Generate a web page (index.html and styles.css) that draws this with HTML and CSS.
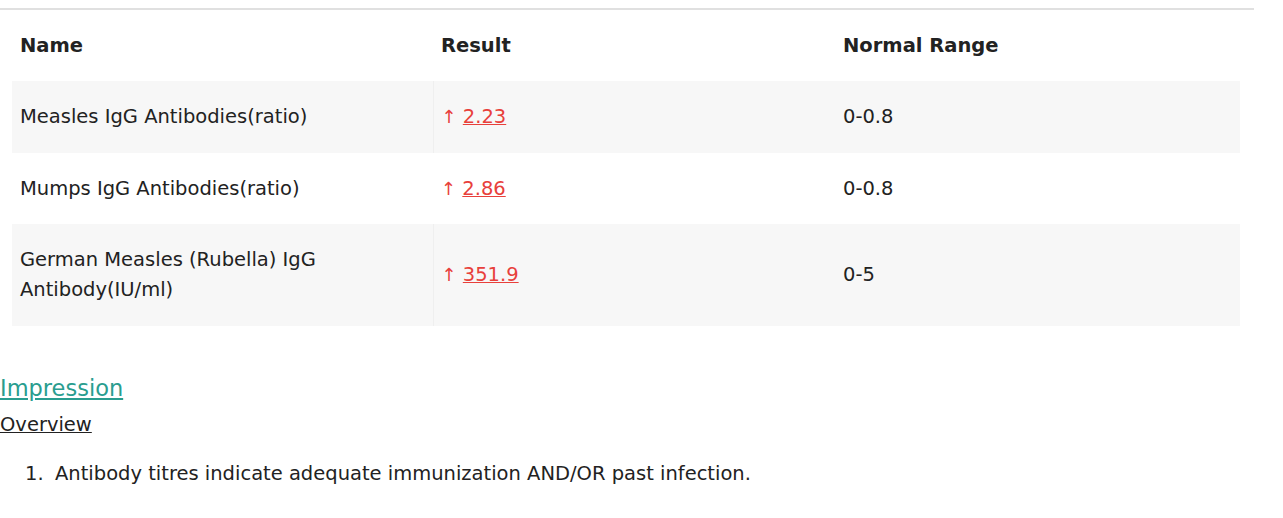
FILE: index.html
```html
<!DOCTYPE html>
<html>
<head>
<meta charset="utf-8">
<link rel="stylesheet" href="styles.css">
</head>
<body>
<div class="rule"></div>
<table class="results">
  <colgroup>
    <col class="c-name">
    <col class="c-result">
    <col class="c-range">
  </colgroup>
  <thead>
    <tr><th>Name</th><th>Result</th><th>Normal Range</th></tr>
  </thead>
  <tbody>
    <tr class="shaded">
      <td>Measles IgG Antibodies(ratio)</td>
      <td class="res"><span class="arrow">↑</span> <a href="#">2.23</a></td>
      <td>0-0.8</td>
    </tr>
    <tr>
      <td>Mumps IgG Antibodies(ratio)</td>
      <td class="res"><span class="arrow">↑</span> <a href="#">2.86</a></td>
      <td>0-0.8</td>
    </tr>
    <tr class="shaded">
      <td>German Measles (Rubella) IgG Antibody(IU/ml)</td>
      <td class="res"><span class="arrow">↑</span> <a href="#">351.9</a></td>
      <td>0-5</td>
    </tr>
  </tbody>
</table>
<section class="impression">
  <a class="imp-title" href="#">Impression</a>
  <div class="overview">Overview</div>
  <ol class="points">
    <li>Antibody titres indicate adequate immunization AND/OR past infection.</li>
  </ol>
</section>
</body>
</html>
```

FILE: styles.css
```css
html, body {
  margin: 0;
  padding: 0;
  background: #fff;
}
body {
  font-family: "DejaVu Sans", sans-serif;
  color: #222;
  font-size: 19.5px;
}
.rule {
  width: 1254px;
  height: 0;
  margin-top: 8px;
  border-bottom: 2px solid #e0e0e0;
}
.results {
  margin-left: 12px;
  width: 1228px;
  border-collapse: collapse;
  table-layout: fixed;
}
.c-name { width: 421px; }
.c-result { width: 402px; }
.c-range { width: 405px; }
.results th {
  text-align: left;
  font-weight: bold;
  font-size: 19.5px;
  line-height: 29px;
  padding: 21px 8px 21px 8px;
  color: #222;
}
.results td {
  font-size: 19.5px;
  line-height: 30px;
  padding: 21px 8px 20.5px 8px;
  vertical-align: middle;
  color: #222;
}
.results tr.shaded td {
  background: #f7f7f7;
}
.results tr.shaded td.res {
  border-left: 1px solid #efefef;
}
.results td.res,
.results td.res a {
  color: #e8403b;
}
.results td.res a {
  text-decoration: underline;
}
.arrow {
  font-size: 18px;
}
.impression {
  margin-top: 46px;
}
.imp-title {
  display: inline-block;
  font-size: 22.5px;
  line-height: 32px;
  color: #2a9d8f;
  text-decoration: underline;
}
.overview {
  font-size: 19.5px;
  line-height: 30px;
  margin-top: 6px;
  text-decoration: underline;
  color: #222;
}
.points {
  margin: 19px 0 0 0;
  padding-left: 25px;
  list-style: none;
  font-size: 19.5px;
  line-height: 30px;
}
.points li::before {
  content: counter(list-item) ".";
  display: inline-block;
  width: 30px;
}
```
